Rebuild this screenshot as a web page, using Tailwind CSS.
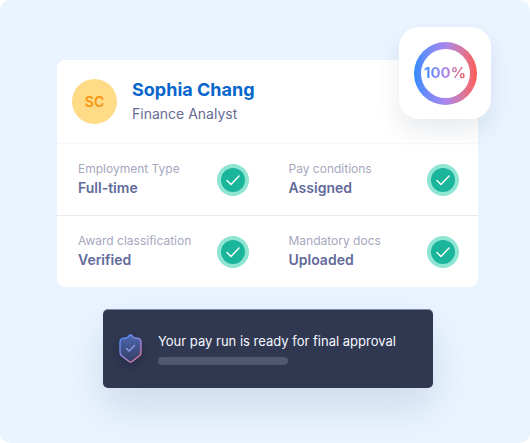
<!DOCTYPE html>
<html lang="en">

<head>
    <meta charset="UTF-8">
    <meta name="viewport" content="width=device-width, initial-scale=1.0">
    <title>Pay run approval</title>
    <script src="https://cdn.jsdelivr.net/npm/@tailwindcss/browser@4"></script>
</head>

<body class="bg-white font-['Inter',sans-serif]">
    <!-- shared tick icon -->
    <svg class="hidden">
        <symbol id="tick" viewBox="0 0 32 32">
            <circle cx="16" cy="16" r="16" fill="#8fe5d3" />
            <circle cx="16" cy="16" r="12" fill="#1bb59b" />
            <path d="M10 16.5L14 20.5L22 12" fill="none" stroke="#fff" stroke-width="1.4" stroke-linecap="round" stroke-linejoin="round" />
        </symbol>
    </svg>

    <main class="min-h-screen overflow-hidden rounded-[10px] bg-[#e9f4ff] pt-[60px] pr-[52px] pb-12 pl-[57px]">
        <section class="relative rounded-lg bg-white">
            <header class="flex h-[83px] items-center gap-[15px] pl-[15px]">
                <div class="flex size-[45px] items-center justify-center rounded-full bg-[#ffdb87] text-sm font-semibold text-[#f7930d]">SC</div>
                <div>
                    <h1 class="text-lg leading-6 font-bold text-[#0766cc]">Sophia Chang</h1>
                    <p class="text-sm leading-6 text-[#666b94]">Finance Analyst</p>
                </div>
            </header>

            <dl class="grid grid-cols-2">
                <div class="flex h-[72px] items-center justify-between border-t border-[#f7f8fa] pr-[19px] pl-[21px]">
                    <div class="pb-1">
                        <dt class="text-xs leading-5 text-[#a5a8bd]">Employment Type</dt>
                        <dd class="text-sm leading-[18px] font-semibold text-[#626a9b]">Full-time</dd>
                    </div>
                    <svg class="size-8"><use href="#tick" /></svg>
                </div>
                <div class="flex h-[72px] items-center justify-between border-t border-[#f7f8fa] pr-[19px] pl-[21px]">
                    <div class="pb-1">
                        <dt class="text-xs leading-5 text-[#a5a8bd]">Pay conditions</dt>
                        <dd class="text-sm leading-[18px] font-semibold text-[#626a9b]">Assigned</dd>
                    </div>
                    <svg class="size-8"><use href="#tick" /></svg>
                </div>
                <div class="flex h-[72px] items-center justify-between border-t border-[#e9eaee] pr-[19px] pl-[21px]">
                    <div class="pb-1">
                        <dt class="text-xs leading-5 text-[#a5a8bd]">Award classification</dt>
                        <dd class="text-sm leading-[18px] font-semibold text-[#626a9b]">Verified</dd>
                    </div>
                    <svg class="size-8"><use href="#tick" /></svg>
                </div>
                <div class="flex h-[72px] items-center justify-between border-t border-[#e9eaee] pr-[19px] pl-[21px]">
                    <div class="pb-1">
                        <dt class="text-xs leading-5 text-[#a5a8bd]">Mandatory docs</dt>
                        <dd class="text-sm leading-[18px] font-semibold text-[#626a9b]">Uploaded</dd>
                    </div>
                    <svg class="size-8"><use href="#tick" /></svg>
                </div>
            </dl>

            <!-- completion badge over the card corner -->
            <div class="absolute -top-[33px] -right-[13px] flex size-[92px] items-center justify-center rounded-[20px] bg-white shadow-[0_12px_24px_rgba(40,60,90,0.10)]">
                <div class="flex size-[63px] items-center justify-center rounded-full bg-linear-to-r from-[#2a8cff] via-[#a886ee] to-[#ff5a50] p-[7px]">
                    <div class="flex size-full items-center justify-center rounded-full bg-white">
                        <span class="bg-linear-to-r from-[#2a8cff] via-[#a886ee] to-[#e84f4f] bg-clip-text text-[15px] font-bold text-transparent">100%</span>
                    </div>
                </div>
            </div>
        </section>

        <section class="mt-[22px] mr-[45px] ml-[46px] flex h-[79px] items-center gap-[14px] rounded-[5px] border-t border-[#7f8aa8] bg-[#303851] pl-[14px] shadow-[0_20px_36px_rgba(60,80,110,0.14)]">
            <svg class="h-[34px] w-[27px] shrink-0 overflow-visible" viewBox="0 0 27 34" fill="none" stroke-linecap="round" stroke-linejoin="round">
                <defs>
                    <linearGradient id="shieldLine" x1="3" y1="8" x2="25" y2="28" gradientUnits="userSpaceOnUse">
                        <stop stop-color="#5593ff" />
                        <stop offset="0.5" stop-color="#a58bea" />
                        <stop offset="1" stop-color="#ff7585" />
                    </linearGradient>
                    <linearGradient id="shieldFill" x1="0" y1="4" x2="0" y2="31" gradientUnits="userSpaceOnUse">
                        <stop stop-color="#4d66ad" />
                        <stop offset="1" stop-color="#343c60" />
                    </linearGradient>
                    <radialGradient id="shieldGlow">
                        <stop stop-color="#202743" stop-opacity="0.8" />
                        <stop offset="1" stop-color="#202743" stop-opacity="0" />
                    </radialGradient>
                </defs>
                <circle cx="13" cy="20" r="21" fill="url(#shieldGlow)" />
                <path d="M13.5 3C12 3 11.8 4.8 10.3 5.5C8.5 6.3 6.5 5.8 5 6.5C3.7 7.1 3 8 3 9.7V20.5C3 22 3.5 22.8 4.6 23.8L12 29.5C13 30.2 14 30.2 15 29.5L22.4 23.8C23.5 22.8 24 22 24 20.5V9.7C24 8 23.3 7.1 22 6.5C20.5 5.8 18.5 6.3 16.7 5.5C15.2 4.8 15 3 13.5 3Z" fill="url(#shieldFill)" stroke="url(#shieldLine)" stroke-width="1.3" />
                <path d="M9.5 16.5L12 19L17.5 13.5" stroke="#8d9ff5" stroke-width="1.2" />
            </svg>
            <div class="pb-[2px]">
                <p class="text-[13px] leading-5 text-[#f4f7ff]">Your pay run is ready for final approval</p>
                <div class="mt-[6px] h-2 w-[130px] rounded-full bg-[#50586f]"></div>
            </div>
        </section>
    </main>
</body>

</html>
